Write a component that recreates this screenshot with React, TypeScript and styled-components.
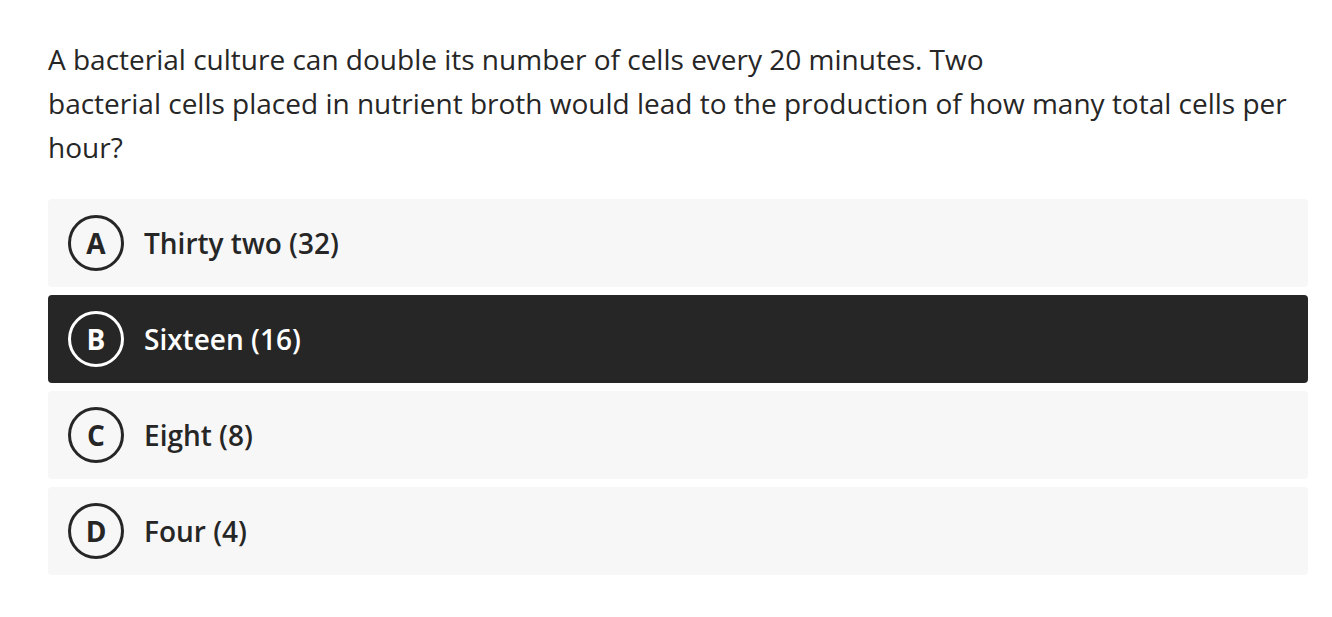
import React from 'react';
import styled, { createGlobalStyle } from 'styled-components';

const GlobalStyle = createGlobalStyle`
    body {
        margin: 0;
        background: #ffffff;
        font-family: "Open Sans", "Noto Sans", sans-serif;
        color: #262626;
    }
`;

const Page = styled.div`
    padding: 37px 24px 40px 48px;
`;

const Question = styled.p`
    margin: 0 0 30px 0;
    font-size: 28px;
    line-height: 44px;
    font-weight: 400;
    color: #262626;
`;

const OptionList = styled.div`
    display: flex;
    flex-direction: column;
    gap: 8px;
`;

const Option = styled.div<{ $selected?: boolean }>`
    display: flex;
    align-items: center;
    gap: 20px;
    height: 88px;
    padding: 0 20px;
    border-radius: 4px;
    background-color: ${(p) => (p.$selected ? '#262626' : '#f7f7f7')};
    color: ${(p) => (p.$selected ? '#ffffff' : '#262626')};
    cursor: pointer;
`;

const Letter = styled.span`
    display: flex;
    align-items: center;
    justify-content: center;
    flex-shrink: 0;
    box-sizing: border-box;
    width: 56px;
    height: 56px;
    border: 3px solid currentColor;
    border-radius: 50%;
    font-size: 28px;
    font-weight: 700;
`;

const Label = styled.span`
    font-size: 28px;
    font-weight: 600;
`;

const options = [
    { key: 'A', text: 'Thirty two (32)' },
    { key: 'B', text: 'Sixteen (16)' },
    { key: 'C', text: 'Eight (8)' },
    { key: 'D', text: 'Four (4)' },
];

const App: React.FC = () => {
    const selected = 'B';

    return (
        <>
            <GlobalStyle />
            <Page>
                <Question>
                    A bacterial culture can double its number of cells every 20 minutes. Two
                    <br />
                    bacterial cells placed in nutrient broth would lead to the production of how many total cells per hour?
                </Question>
                <OptionList>
                    {options.map((o) => (
                        <Option key={o.key} $selected={o.key === selected}>
                            <Letter>{o.key}</Letter>
                            <Label>{o.text}</Label>
                        </Option>
                    ))}
                </OptionList>
            </Page>
        </>
    );
};

export default App;
